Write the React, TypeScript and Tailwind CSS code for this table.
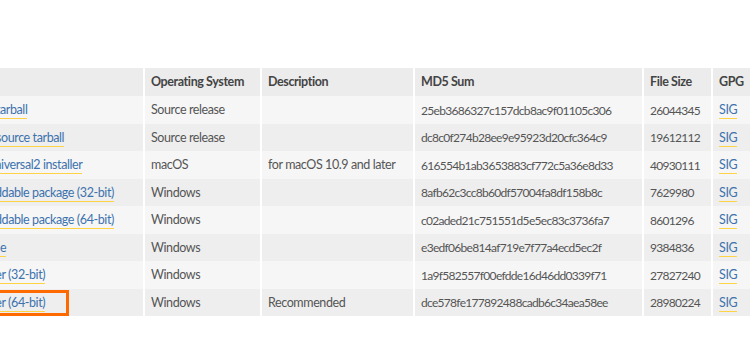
const rows = [
  { name: "Gzipped source tarball", os: "Source release", desc: "", md5: "25eb3686327c157dcb8ac9f01105c306", size: "26044345" },
  { name: "XZ compressed source tarball", os: "Source release", desc: "", md5: "dc8c0f274b28ee9e95923d20cfc364c9", size: "19612112" },
  { name: "macOS 64-bit universal2 installer", os: "macOS", desc: "for macOS 10.9 and later", md5: "616554b1ab3653883cf772c5a36e8d33", size: "40930111" },
  { name: "Windows embeddable package (32-bit)", os: "Windows", desc: "", md5: "8afb62c3cc8b60df57004fa8df158b8c", size: "7629980" },
  { name: "Windows embeddable package (64-bit)", os: "Windows", desc: "", md5: "c02aded21c751551d5e5ec83c3736fa7", size: "8601296" },
  { name: "Windows help file", os: "Windows", desc: "", md5: "e3edf06be814af719e7f77a4ecd5ec2f", size: "9384836" },
  { name: "Windows installer (32-bit)", os: "Windows", desc: "", md5: "1a9f582557f00efdde16d46dd0339f71", size: "27827240" },
  { name: "Windows installer (64-bit)", os: "Windows", desc: "Recommended", md5: "dce578fe177892488cadb6c34aea58ee", size: "28980224" },
]

const cols = "grid grid-cols-[236px_115px_151px_227px_67px_80px] gap-x-[2px]"

function Link({ children }: { children: React.ReactNode }) {
  return (
    <a href="#" className="text-[#3d72ad] border-b border-[#ffd343] leading-[15px] pb-[1px]">
      {children}
    </a>
  )
}

export default function App() {
  return (
    <div className="w-[750px] h-[350px] bg-white overflow-hidden font-['Lato',sans-serif] text-[12.5px] tracking-[-0.4px]">
      <div className="ml-[-93px] mt-[68px] w-[900px] bg-white">
        {/* header */}
        <div className={`${cols} h-[28px] font-bold text-[#444]`}>
          <div className="bg-[#ececec]" />
          <div className="bg-[#ececec] flex items-center px-[6px] pt-[1px]">Operating System</div>
          <div className="bg-[#ececec] flex items-center px-[6px] pt-[1px]">Description</div>
          <div className="bg-[#ececec] flex items-center px-[6px] pt-[1px]">MD5 Sum</div>
          <div className="bg-[#ececec] flex items-center px-[6px] pt-[1px]">File Size</div>
          <div className="bg-[#ececec] flex items-center px-[6px] pt-[1px]">GPG</div>
        </div>

        {rows.map((r, i) => {
          const bg = i % 2 === 0 ? "bg-[#f6f6f6]" : "bg-[#eeeeee]"
          const last = i === rows.length - 1
          return (
            <div key={r.md5} className={`${cols} h-[27.5px] text-[#555]`}>
              <div className={`${bg} relative flex items-center px-[7px] pt-[2px] whitespace-nowrap`}>
                <Link>{r.name}</Link>
                {last && (
                  <div className="absolute top-[1px] bottom-0 left-[30px] right-[74px] border-[3px] border-[#ff6a00]" />
                )}
              </div>
              <div className={`${bg} flex items-center px-[6px] pt-[2px]`}>{r.os}</div>
              <div className={`${bg} flex items-center px-[6px] pt-[2px] whitespace-nowrap`}>{r.desc}</div>
              <div className={`${bg} flex items-center px-[6px] pt-[2px] text-[12px] tracking-[-0.7px]`}>{r.md5}</div>
              <div className={`${bg} flex items-center px-[6px] pt-[2px] text-[12px] tracking-[-0.7px]`}>{r.size}</div>
              <div className={`${bg} flex items-center px-[6px] pt-[2px]`}>
                <Link>SIG</Link>
              </div>
            </div>
          )
        })}
      </div>
    </div>
  )
}
